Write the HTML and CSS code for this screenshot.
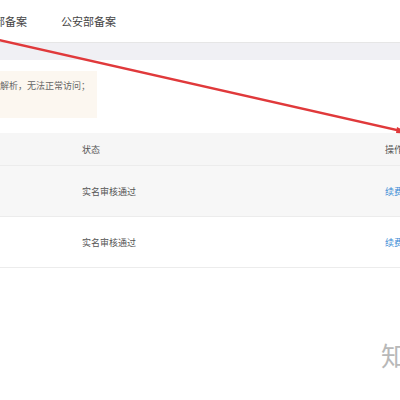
FILE: index.html
```html
<!DOCTYPE html>
<html lang="zh-CN">
<head>
    <meta charset="UTF-8">
    <meta name="viewport" content="width=device-width, initial-scale=1.0">
    <title>备案管理</title>
    <link rel="stylesheet" href="styles.css">
</head>
<body>
    <div class="page">
        <div class="tabs">
            <span class="tab">工信部备案</span>
            <span class="tab">公安部备案</span>
        </div>
        <div class="strip"></div>
        <div class="content">
            <div class="notice">解析，无法正常访问；</div>
            <div class="table">
                <div class="row head">
                    <div class="cell"></div>
                    <div class="cell">状态</div>
                    <div class="cell">操作</div>
                </div>
                <div class="row hover">
                    <div class="cell"></div>
                    <div class="cell">实名审核通过</div>
                    <div class="cell"><a class="link">续费</a></div>
                </div>
                <div class="row">
                    <div class="cell"></div>
                    <div class="cell">实名审核通过</div>
                    <div class="cell"><a class="link">续费</a></div>
                </div>
            </div>
        </div>
    </div>

    <svg class="arrow" width="400" height="400" viewBox="0 0 400 400">
        <path d="M-10 38 L410 133" stroke="#e0393b" stroke-width="2.5" fill="none"/>
        <path d="M397 127 L412 134 L396 133 Z" fill="#e0393b"/>
    </svg>
    <div class="watermark">知</div>
</body>
</html>
```

FILE: styles.css
```css
body {
    margin: 0;
    width: 400px;
    height: 400px;
    overflow: hidden;
    background-color: #fff;
    font-family: "Noto Sans CJK SC", "Liberation Sans", sans-serif;
    position: relative;
}
.page {
    margin-left: -34px;
    width: 480px;
}
.tabs {
    height: 42px;
    display: flex;
    align-items: center;
    gap: 34px;
    padding-left: 6px;
    background-color: #fff;
    border-bottom: 1px solid #e6e6e6;
}
.tab {
    font-size: 11px;
    color: #444;
}
.strip {
    height: 17px;
    background-color: #f0f0f4;
}
.content {
    padding-top: 11px;
}
.notice {
    width: 97px;
    height: 47px;
    box-sizing: border-box;
    margin-left: 34px;
    padding-top: 8px;
    background-color: #fcf7f0;
    font-size: 9px;
    color: #666;
    white-space: nowrap;
}
.table {
    margin-top: 15px;
}
.row {
    display: grid;
    grid-template-columns: 116px 303px 1fr;
    height: 50px;
    align-items: center;
    border-bottom: 1px solid #ececec;
    font-size: 9px;
    color: #555;
}
.row.head {
    height: 32px;
    background-color: #f6f6f6;
}
.row.hover {
    background-color: #f7f7f7;
}
.link {
    color: #3c8dd6;
}
.arrow {
    position: absolute;
    left: 0;
    top: 0;
}
.watermark {
    position: absolute;
    left: 381px;
    top: 336px;
    font-size: 26px;
    color: #b8b8b8;
}
```
